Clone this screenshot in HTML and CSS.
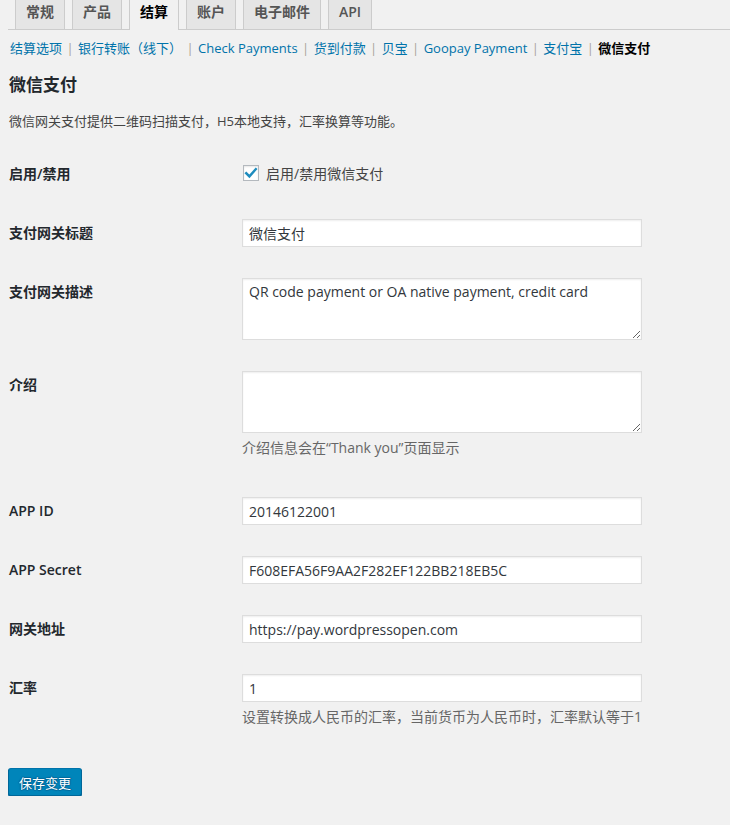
FILE: index.html
```html
<!DOCTYPE html>
<html>
<head>
  <title>结算 - 微信支付</title>
  <meta charset="UTF-8">
  <link rel="stylesheet" href="styles.css">
</head>
<body>
<div class="wrap">

  <div class="nav-tabs">
    <a href="#" class="nav-tab">常规</a>
    <a href="#" class="nav-tab">产品</a>
    <a href="#" class="nav-tab active">结算</a>
    <a href="#" class="nav-tab">账户</a>
    <a href="#" class="nav-tab">电子邮件</a>
    <a href="#" class="nav-tab">API</a>
  </div>

  <ul class="subsubsub">
    <li><a href="#">结算选项</a><span class="sep">|</span></li>
    <li><a href="#">银行转账（线下）</a><span class="sep">|</span></li>
    <li><a href="#">Check Payments</a><span class="sep">|</span></li>
    <li><a href="#">货到付款</a><span class="sep">|</span></li>
    <li><a href="#">贝宝</a><span class="sep">|</span></li>
    <li><a href="#">Goopay Payment</a><span class="sep">|</span></li>
    <li><a href="#">支付宝</a><span class="sep">|</span></li>
    <li><a href="#" class="current">微信支付</a></li>
  </ul>

  <h3>微信支付</h3>
  <p class="intro">微信网关支付提供二维码扫描支付，H5本地支持，汇率换算等功能。</p>

  <form id="settingsForm">
    <div class="form-row check-row">
      <div class="label">启用/禁用</div>
      <div class="field">
        <label class="check">
          <span class="box">
            <svg width="14" height="14" viewBox="0 0 14 14"><path d="M2.2 7.2 L5.4 10.4 L11.8 3.2" fill="none" stroke="#1e8cbe" stroke-width="2.4" stroke-linecap="square"/></svg>
          </span>
          启用/禁用微信支付
        </label>
      </div>
    </div>

    <div class="form-row">
      <div class="label">支付网关标题</div>
      <div class="field"><input type="text" value="微信支付"></div>
    </div>

    <div class="form-row">
      <div class="label">支付网关描述</div>
      <div class="field"><textarea>QR code payment or OA native payment, credit card</textarea></div>
    </div>

    <div class="form-row">
      <div class="label">介绍</div>
      <div class="field">
        <textarea></textarea>
        <p class="hint">介绍信息会在“Thank you”页面显示</p>
      </div>
    </div>

    <div class="form-row">
      <div class="label">APP ID</div>
      <div class="field"><input type="text" value="20146122001"></div>
    </div>

    <div class="form-row">
      <div class="label">APP Secret</div>
      <div class="field"><input type="text" value="F608EFA56F9AA2F282EF122BB218EB5C"></div>
    </div>

    <div class="form-row">
      <div class="label">网关地址</div>
      <div class="field"><input type="text" value="https://pay.wordpressopen.com"></div>
    </div>

    <div class="form-row">
      <div class="label">汇率</div>
      <div class="field">
        <input type="text" value="1">
        <p class="hint">设置转换成人民币的汇率，当前货币为人民币时，汇率默认等于1</p>
      </div>
    </div>

    <button type="submit" class="btn">保存变更</button>
  </form>

</div>
</body>
</html>
```

FILE: styles.css
```css
body {
  background-color: #f1f1f1;
  font-family: "Open Sans", "Noto Sans CJK SC", sans-serif;
  color: #444;
  font-size: 13px;
  margin: 0;
}

.wrap {
  padding-left: 8px;
}

/* tabs */
.nav-tabs {
  display: flex;
  align-items: flex-end;
  border-bottom: 1px solid #ccc;
  height: 29px;
}

.nav-tab {
  display: block;
  margin-left: 7px;
  padding: 0 10px 5px;
  line-height: 24px;
  font-size: 14px;
  font-weight: 600;
  color: #555;
  text-decoration: none;
  background-color: #e5e5e5;
  border: 1px solid #ccc;
  border-top: none;
  border-bottom: none;
}

.nav-tab.active {
  background-color: #f1f1f1;
  color: #000;
  padding-bottom: 6px;
  margin-bottom: -1px;
}

/* sub menu */
.subsubsub {
  list-style: none;
  margin: 8px 0 0;
  padding: 0 0 0 2px;
  line-height: 20px;
  font-size: 13px;
  display: flex;
}

.subsubsub a {
  color: #0073aa;
  text-decoration: none;
}

.subsubsub a.current {
  color: #000;
  font-weight: 600;
}

.sep {
  display: inline-block;
  width: 16px;
  text-align: center;
  color: #a8a29a;
}

h3 {
  margin: 15px 0 0 1px;
  font-size: 17px;
  line-height: 24px;
  font-weight: 600;
  color: #23282d;
}

.intro {
  margin: 14px 0 0 1px;
  line-height: 20px;
  font-size: 13px;
}

form {
  margin-top: 14px;
}

/* settings rows */
.form-row {
  display: grid;
  grid-template-columns: 234px 400px;
}

.form-row .label {
  padding: 20px 0 0 1px;
  line-height: 18px;
  font-size: 14px;
  font-weight: 600;
  color: #23282d;
}

.form-row .field {
  padding: 15px 0 16px;
}

.check-row .field {
  padding: 20px 0 23px;
}

.check {
  display: flex;
  align-items: center;
  height: 16px;
  font-size: 14px;
  color: #444;
}

.box {
  width: 16px;
  height: 16px;
  box-sizing: border-box;
  margin: 0 7px 0 1px;
  border: 1px solid #b4b9be;
  background-color: white;
  box-shadow: inset 0 1px 2px rgba(0, 0, 0, 0.1);
  display: flex;
  align-items: center;
  justify-content: center;
}

input,
textarea {
  display: block;
  width: 100%;
  margin: 0;
  border: 1px solid #ddd;
  background-color: white;
  box-shadow: inset 0 1px 2px rgba(0, 0, 0, 0.07);
  box-sizing: border-box;
  font-family: "Open Sans", "Noto Sans CJK SC", sans-serif;
  font-size: 14px;
  color: #32373c;
  outline: none;
}

input {
  height: 28px;
  padding: 0 6px;
}

textarea {
  height: 62px;
  padding: 3px 6px;
  line-height: 20px;
}

.hint {
  margin: 5px 0 8px;
  line-height: 20px;
  font-size: 14px;
  color: #666;
}

.btn {
  display: block;
  margin-top: 17px;
  height: 28px;
  padding: 0 10px;
  font-family: "Open Sans", "Noto Sans CJK SC", sans-serif;
  font-size: 13px;
  color: white;
  background-color: #0085ba;
  border: 1px solid #0073aa;
  border-color: #0073aa #006799 #006799;
  border-radius: 3px;
  box-shadow: 0 1px 0 #006799;
  text-shadow: 0 -1px 1px #006799, 1px 0 1px #006799, 0 1px 1px #006799, -1px 0 1px #006799;
  cursor: pointer;
}
```
